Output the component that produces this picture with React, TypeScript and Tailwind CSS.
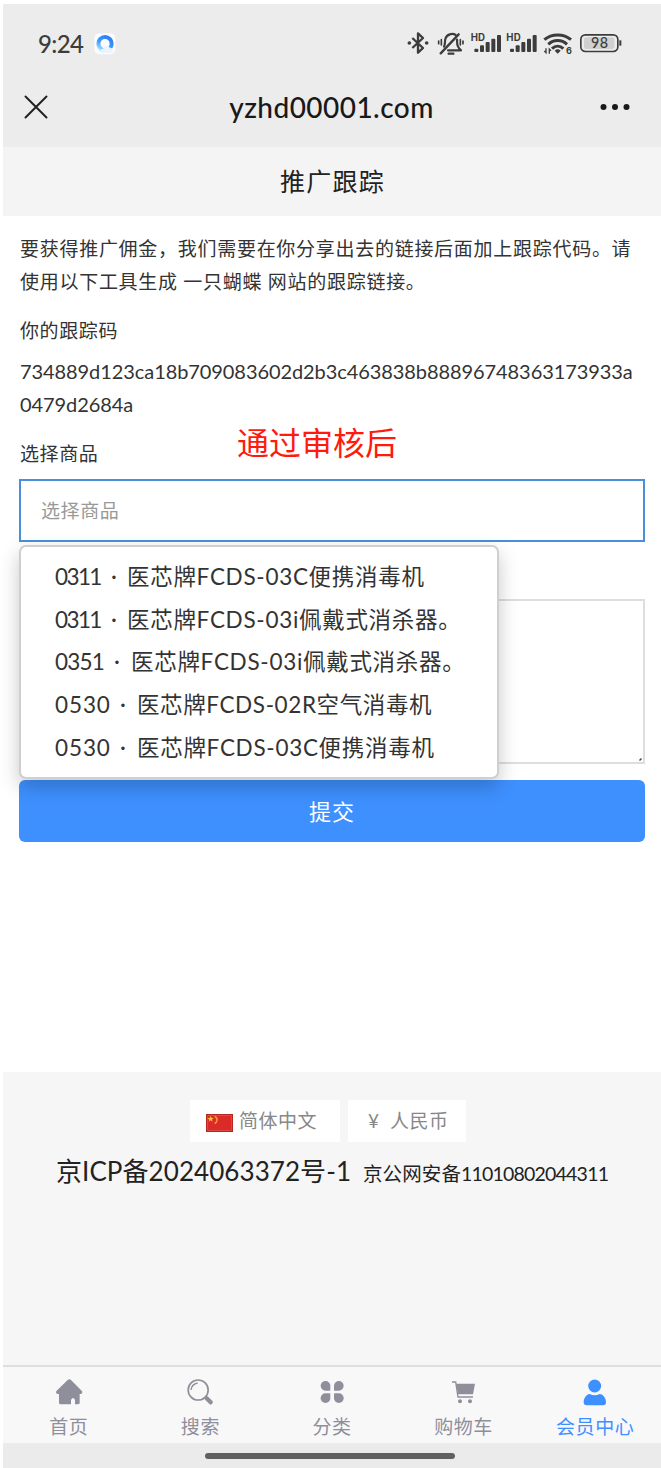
import type { ReactNode } from "react";

const INK = "#3c3c3c";

function StatusIcons() {
  const bars = [
    [223, 86, 10],
    [240, 76, 20],
    [257, 66, 30],
    [274, 56, 40],
    [291, 45, 51],
  ];
  return (
    <svg width="230" height="50" viewBox="0 0 690 150" fill="none" stroke={INK}>
      <path d="M37 54 L69 84 L54 98 V40 L69 54 L37 84" strokeWidth="7" strokeLinejoin="round" />
      <circle cx="28" cy="69" r="5.500" fill={INK} stroke="none" />
      <circle cx="80" cy="69" r="5.500" fill={INK} stroke="none" />
      <g strokeWidth="6.500" strokeLinecap="round">
        <path d="M122 100 L176 43" strokeWidth="7" />
        <path d="M132 80 C136 74 134 64 136 57 C140 43 157 38 167 45" />
        <path d="M171 59 C172 73 170 79 183 91 H144" strokeLinejoin="round" />
        <path d="M146 101 H160" strokeWidth="7" />
        <path d="M124 59 V75 M116 63 V71 M181 59 V75 M189 63 V71" strokeWidth="5" />
      </g>
      {[0, 107].map((dx) => (
        <g key={dx} transform={`translate(${dx} 0)`} fill={INK} stroke="none">
          <text x="212" y="62" fontSize="29" fontWeight="700" textLength="43" className="font-[Inter]">HD</text>
          {bars.map(([x, y, h]) => (
            <rect key={x} x={x} y={y} width="12" height={h} rx="3" />
          ))}
        </g>
      ))}
      <g strokeWidth="9">
        <path d="M433 59 C455 40 491 40 513 59" />
        <path d="M445 73 C461 58 485 58 501 73" />
        <path d="M456 86 C466 76 480 76 490 86" />
      </g>
      <path d="M464 92 Q473 84 482 92 L473 101 Z" fill={INK} stroke="none" />
      <path d="M438 85 V98 L433 93 M448 101 V87 L453 92" strokeWidth="4" />
      <text x="498" y="102" fontSize="27" fontWeight="700" fill={INK} stroke="none" className="font-[Inter]">6</text>
      <rect x="542.500" y="44.500" width="111" height="50" rx="14" strokeWidth="5" />
      <rect x="552" y="52" width="91" height="35" rx="7" fill="#d0d0d0" stroke="none" />
      <path d="M661 61 V77" strokeWidth="6" />
      <text x="573" y="85" fontSize="43" fontWeight="500" textLength="51" fill={INK} stroke="none" className="font-[Lato]">98</text>
    </svg>
  );
}

function BrowserBadge() {
  return (
    <svg width="22" height="22" viewBox="0 0 66 66">
      <defs>
        <linearGradient id="ring" x1="0.800" y1="0" x2="0.200" y2="1">
          <stop offset="0" stopColor="#2f7df6" />
          <stop offset="0.600" stopColor="#3fa0fb" />
          <stop offset="1" stopColor="#a9e0ff" />
        </linearGradient>
      </defs>
      <rect x="1" y="1" width="63" height="63" rx="15" fill="#fafcff" />
      <circle cx="33" cy="32" r="20" fill="none" stroke="url(#ring)" strokeWidth="12" />
      <path d="M29 60 C17 60 17 47 28 47 C30 36 44 36 47 44 C59 43 60 60 49 60 Z" fill="#eaf4ff" />
    </svg>
  );
}

function Tab({ label, active, children }: { label: string; active?: boolean; children: ReactNode }) {
  return (
    <div className={`flex flex-1 flex-col items-center pt-[10px] ${active ? "text-[#3e90ff]" : "text-[#8f8f9b]"}`}>
      {children}
      <span className="mt-2 text-[19px] leading-6 tracking-[0.6px]">{label}</span>
    </div>
  );
}

const products = [
  { code: "0311", name: "医芯牌FCDS-03C便携消毒机", codeClass: "w-[59px] tracking-[-1.600px]", dotClass: "w-[13px]", nameClass: "tracking-[0.700px]" },
  { code: "0311", name: "医芯牌FCDS-03i佩戴式消杀器。", codeClass: "w-[59px] tracking-[-1.600px]", dotClass: "w-[13px]", nameClass: "tracking-[0.700px]" },
  { code: "0351", name: "医芯牌FCDS-03i佩戴式消杀器。", codeClass: "w-[62px] tracking-[-0.800px]", dotClass: "w-[14px]", nameClass: "tracking-[0.700px]" },
  { code: "0530", name: "医芯牌FCDS-02R空气消毒机", codeClass: "w-[68px] tracking-[0.900px]", dotClass: "w-[14px]", nameClass: "tracking-[0.600px]" },
  { code: "0530", name: "医芯牌FCDS-03C便携消毒机", codeClass: "w-[68px] tracking-[0.900px]", dotClass: "w-[14px]", nameClass: "tracking-[0.700px]" },
];

export default function App() {
  return (
    <div className="h-[1468px] w-[661px] overflow-hidden bg-white pt-1 pl-[3px] font-['Lato','Noto_Sans_CJK_SC',sans-serif] text-[#333]">
      <header className="h-[143px] bg-[#ececec]">
        <div className="flex h-[79px] items-center">
          <span className="ml-[35px] w-[56px] text-[24px] font-medium tracking-[-0.6px] text-[#3c3c3c]">9:24</span>
          <BrowserBadge />
          <div className="mt-[3px] mr-[31px] ml-auto">
            <StatusIcons />
          </div>
        </div>
        <div className="flex h-12 items-center justify-between pr-[31px] pl-[21px]">
          <svg width="24" height="24" viewBox="0 0 24 24" stroke="#222" strokeWidth="2" strokeLinecap="round">
            <path d="M1.500 1.500 L22.500 22.500 M22.500 1.500 L1.500 22.500" />
          </svg>
          <h1 className="ml-[15px] text-[28px] font-medium tracking-[0.450px] text-[#191919]">yzhd00001.com</h1>
          <svg width="30" height="8" viewBox="0 0 30 8" fill="#191919">
            <circle cx="3.500" cy="4" r="3" />
            <circle cx="15" cy="4" r="3" />
            <circle cx="26.500" cy="4" r="3" />
          </svg>
        </div>
      </header>

      <div className="flex h-[69px] items-center justify-center bg-[#f4f4f4] pl-px text-[25px] tracking-[1.200px] text-[#222]">推广跟踪</div>

      <main className="relative h-[856px] px-4 pt-4 text-[19px] leading-[33px]">
        <p className="pl-px tracking-[0.720px] whitespace-nowrap">
          要获得推广佣金，我们需要在你分享出去的链接后面加上跟踪代码。请
          <br />
          使用以下工具生成 一只蝴蝶 网站的跟踪链接。
        </p>
        <p className="mt-4 pl-px tracking-[0.600px]">你的跟踪码</p>
        <p className="mt-2 pl-px text-[20px] tracking-[-0.080px] whitespace-nowrap">
          734889d123ca18b709083602d2b3c463838b88896748363173933a
          <br />
          0479d2684a
        </p>
        <p className="mt-4 pl-px tracking-[0.600px]">选择商品</p>
        <div className="absolute top-[204px] left-[234px] text-[32px] leading-[46px] whitespace-nowrap text-[#ff1a0d]">通过审核后</div>

        <div className="mt-[9px] flex h-[63px] items-center border-2 border-[#4a8fdc] px-5 tracking-[0.600px] text-[#999]">选择商品</div>

        <div className="relative mt-[57px] h-[165px] border-2 border-[#dedede]">
          <svg className="absolute right-0 bottom-0" width="5" height="5" viewBox="0 0 5 5" stroke="#444">
            <path d="M1.500 3.500 L3.500 1.500" strokeWidth="1.500" />
          </svg>
        </div>

        <ul className="absolute top-[329px] left-4 h-[234px] w-[480px] rounded-[7px] border-2 border-[#cfcfcf] bg-white pt-2 pl-[34px] text-[22.500px] text-[#333] shadow-[0_8px_20px_rgba(0,0,0,0.22)]">
          {products.map((p, i) => (
            <li key={i} className="flex h-[42.750px] items-center whitespace-nowrap">
              <span className={`${p.codeClass} shrink-0`}>{p.code}</span>
              <span className={`${p.dotClass} -mt-[2px] -ml-[3px] mr-[3px] shrink-0`}>·</span>
              <span className={p.nameClass}>{p.name}</span>
            </li>
          ))}
        </ul>

        <button className="mt-4 block h-[62px] w-full rounded-[6px] bg-[#3e90ff] text-[22px] tracking-[1px] text-white">提交</button>
      </main>

      <footer className="h-[293px] bg-[#f6f6f6] pt-7">
        <div className="ml-[187px] flex gap-2 text-[19px] tracking-[0.500px] text-[#888]">
          <div className="flex h-[42px] w-[150px] items-center bg-white pl-4">
            <svg className="mt-1 mr-[6px]" width="27" height="18" viewBox="0 0 81 54">
              <rect width="81" height="54" fill="#b5281f" />
              <rect x="5" y="5" width="71" height="44" fill="#dc2a28" stroke="#e65a55" strokeWidth="2" />
              <path d="M14 6 L17 12 L23 12 L18 17 L20 23 L14 19 L8 23 L10 17 L5 12 L11 12 Z" fill="#f7c13d" />
              <path d="M26 7 Q35 12 33 19 T26 29" fill="none" stroke="#f0a03c" strokeWidth="4.500" />
            </svg>
            简体中文
          </div>
          <div className="flex h-[42px] w-[118px] items-center bg-white pl-5">
            <span className="w-[22px]">¥</span>
            人民币
          </div>
        </div>
        <div className="mt-[11px] ml-[53px] flex items-baseline leading-9 whitespace-nowrap text-[#222]">
          <span className="w-[307px] text-[26px] tracking-[0.070px]">京ICP备2024063372号-1</span>
          <span className="text-[19.500px]">
            <span className="tracking-[0.100px]">京公网安备</span>
            <span className="tracking-[-0.800px]">11010802044311</span>
          </span>
        </div>
      </footer>

      <nav className="flex h-[78px] border-t-2 border-[#dedede] bg-[#f8f8f9]">
        <Tab label="首页">
          <svg width="30" height="30" viewBox="161 80 90 90" fill="currentColor">
            <path d="M202 89 Q207 85 212 89 L244 121 Q249 128 241 131 H238 V157 Q238 162 233 162 H224 V149 Q218 137 212 149 V162 H181 Q176 162 176 157 V131 H172 Q164 128 169 121 Z" />
          </svg>
        </Tab>
        <Tab label="搜索">
          <svg width="30" height="30" viewBox="556 80 90 90" fill="none" stroke="currentColor">
            <circle cx="595.500" cy="119" r="30" strokeWidth="5" />
            <path d="M574 119 Q576 102 594 98" strokeWidth="4" />
            <path d="M616 140 L621 145" strokeWidth="6" />
            <path d="M621 144 L633 156" strokeWidth="13" strokeLinecap="round" />
          </svg>
        </Tab>
        <Tab label="分类">
          <svg width="30" height="30" viewBox="951 80 90 90" fill="currentColor">
            <path d="M991 119 Q991 121 989 121 H976.500 A14.500 14.500 0 1 1 991 106.500 Z" />
            <path d="M1002 119 Q1002 121 1004 121 H1016.500 A14.500 14.500 0 1 0 1002 106.500 Z" />
            <path d="M991 131 Q991 129 989 129 H976.500 A14.500 14.500 0 1 0 991 143.500 Z" />
            <path d="M1002 131 Q1002 129 1004 129 H1016.500 A14.500 14.500 0 1 1 1002 143.500 Z" />
          </svg>
        </Tab>
        <Tab label="购物车">
          <svg width="30" height="30" viewBox="357 80 90 90" fill="currentColor">
            <path d="M378 100 H435 L429 132 H384 Z" />
            <path d="M366 95 H377 L384 140 H429" fill="none" stroke="currentColor" strokeWidth="4" />
            <circle cx="390" cy="153" r="6" />
            <circle cx="420" cy="153" r="6" />
          </svg>
        </Tab>
        <Tab label="会员中心" active>
          <svg width="30" height="30" viewBox="750 80 90 90" fill="currentColor">
            <circle cx="794" cy="107" r="19.500" />
            <path d="M779 131 Q794 139 809 131 C820 132 828 143 828 156 Q828 165 819 165 H770 Q761 165 761 156 C761 143 769 132 779 131 Z" />
          </svg>
        </Tab>
      </nav>
      <div className="flex h-[25px] justify-center bg-[#ebebeb] pt-[10px] pr-[4px]">
        <div className="h-[6px] w-[250px] rounded-full bg-[#606060]" />
      </div>
    </div>
  );
}
